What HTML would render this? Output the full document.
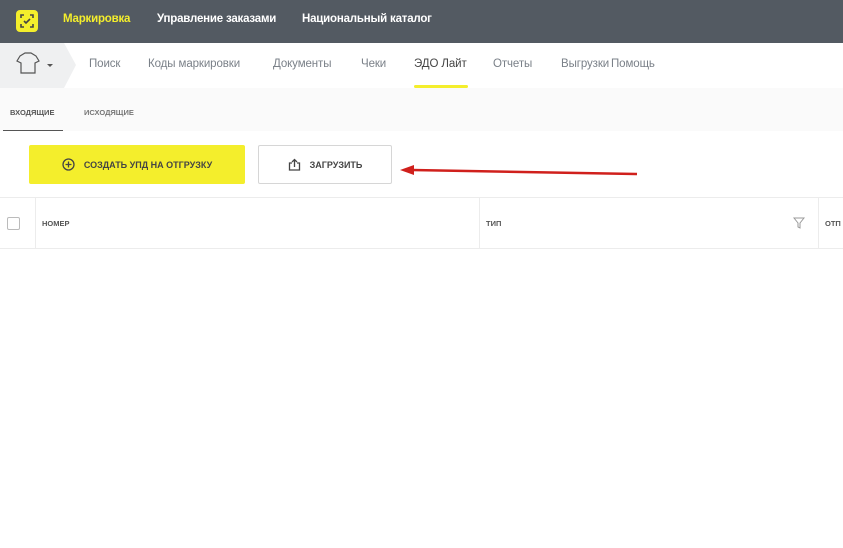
<!DOCTYPE html>
<html><head><meta charset="utf-8"><style>
*{margin:0;padding:0;box-sizing:border-box}
body{width:843px;height:548px;overflow:hidden;background:#fff;font-family:"Liberation Sans",sans-serif;position:relative}
.top{position:absolute;left:0;top:0;width:843px;height:43px;background:#535a62}
.top span{position:absolute;top:13px;font-size:11.5px;font-weight:bold;color:#fff;letter-spacing:-0.2px;white-space:nowrap}
.logo{position:absolute;left:16px;top:10px;width:22px;height:22px;background:#f4ee2c;border-radius:4px}
.nav{position:absolute;left:0;top:43px;width:843px;height:45px;background:#fff}
.shirt{position:absolute;left:0;top:0;width:64px;height:45px;background:#eff0f1}
.nav a{position:absolute;top:15px;font-size:11.5px;color:#7a8088;text-decoration:none;white-space:nowrap;letter-spacing:-0.1px}
.tabs{position:absolute;left:0;top:88px;width:843px;height:43px;background:#fafafa}
.tabs span{position:absolute;top:20px;font-size:7.5px;font-weight:bold;color:#555}
.btn{position:absolute;top:145px;height:39px;font-size:9px;font-weight:bold;color:#444;display:flex;align-items:center;justify-content:center;gap:9px;border-radius:2px}
.th{position:absolute;top:197px;height:52px;border-top:1px solid #ececec;border-bottom:1px solid #ececec;font-size:7.5px;font-weight:bold;color:#555}
.th span{position:absolute;top:21px}
</style></head><body>
<div class="top">
<div class="logo"><svg width="22" height="22" viewBox="0 0 22 22" fill="none" stroke="#444" stroke-width="1.6"><path d="M5 8V5h3M14 5h3v3M17 14v3h-3M8 17H5v-3"/><path d="M8 11l2 2 4-4"/></svg></div>
<span style="left:63px;color:#f4ee2c">Маркировка</span>
<span style="left:157px">Управление заказами</span>
<span style="left:302px">Национальный каталог</span>
</div>
<div class="nav">
<div class="shirt"><svg width="80" height="45" style="position:absolute;left:0;top:0"><path d="M64 0 L76 22 L64 45 Z" fill="#eff0f1"/><path d="M20 13 l5-3 h6 l5 3 l3 5 -4 2 v10 h-14 v-10 l-4-2z" fill="none" stroke="#555" stroke-width="1.2"/><path d="M47 21 h6 l-3 3z" fill="#555"/></svg></div>
<a style="left:89px">Поиск</a>
<a style="left:148px">Коды маркировки</a>
<a style="left:273px">Документы</a>
<a style="left:361px">Чеки</a>
<a style="left:414px;color:#444">ЭДО Лайт</a>
<div style="position:absolute;left:414px;top:42px;width:54px;height:3px;background:#f4ee2c;border-radius:2px"></div>
<a style="left:493px">Отчеты</a>
<a style="left:561px">Выгрузки</a>
<a style="left:611px">Помощь</a>
</div>
<div class="tabs">
<span style="left:10px">ВХОДЯЩИЕ</span>
<span style="left:84px;color:#777">ИСХОДЯЩИЕ</span>
<div style="position:absolute;left:3px;top:42px;width:60px;height:1px;background:#555"></div>
</div>
<div class="btn" style="left:29px;width:216px;background:#f4ee2c"><svg width="13" height="13"><circle cx="6.5" cy="6.5" r="5.5" fill="none" stroke="#444" stroke-width="1.3"/><path d="M6.5 3.5v6M3.5 6.5h6" stroke="#444" stroke-width="1.3"/></svg>СОЗДАТЬ УПД НА ОТГРУЗКУ</div>
<div class="btn" style="left:258px;width:134px;border:1px solid #d6d6d6;background:#fff"><svg width="13" height="13" fill="none" stroke="#444" stroke-width="1.3"><path d="M4 5H1.5v7h10V5H9M6.5 9V1.5M4 4l2.5-2.5L9 4"/></svg>ЗАГРУЗИТЬ</div>
<svg width="843" height="548" style="position:absolute;left:0;top:0;pointer-events:none"><path d="M637 174 L412 170" stroke="#d0201c" stroke-width="2.5"/><path d="M400 170 L414 165 L414 175 Z" fill="#d0201c"/></svg>
<div class="th" style="left:0;width:35px"><div style="position:absolute;left:7px;top:19px;width:13px;height:13px;border:1px solid #bbb;border-radius:2px"></div></div>
<div class="th" style="left:35px;width:444px;border-left:1px solid #ececec"><span style="left:6px">НОМЕР</span></div>
<div class="th" style="left:479px;width:339px;border-left:1px solid #ececec"><span style="left:6px">ТИП</span><svg width="12" height="12" style="position:absolute;left:313px;top:19px" fill="none" stroke="#999"><path d="M1 1h10L7 6v5L5 10V6z"/></svg></div>
<div class="th" style="left:818px;width:30px;border-left:1px solid #ececec"><span style="left:6px">ОТП</span></div>
</body></html>
